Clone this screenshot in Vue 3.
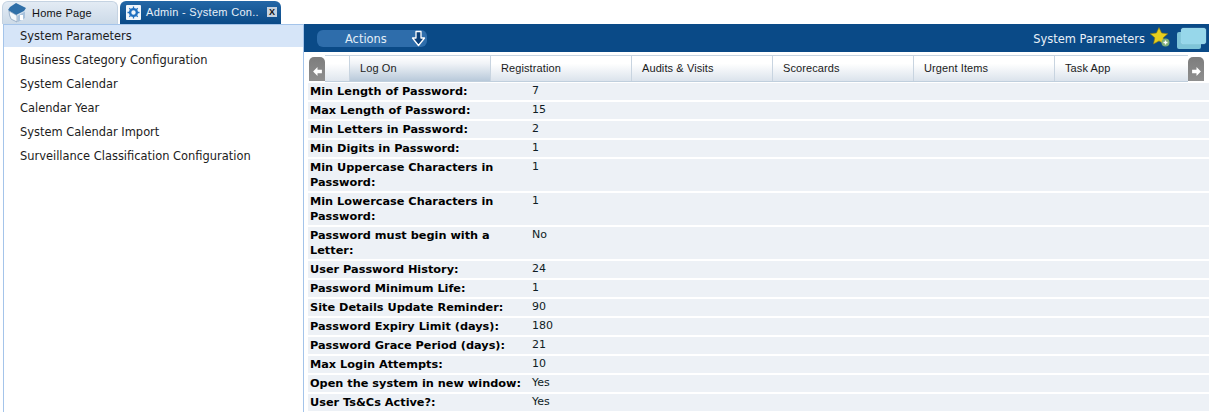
<script setup>
const items = ['System Parameters','Business Category Configuration','System Calendar','Calendar Year','System Calendar Import','Surveillance Classification Configuration']
const tabs = ['Log On','Registration','Audits & Visits','Scorecards','Urgent Items','Task App']
const rows = [
 ['Min Length of Password:','7'],['Max Length of Password:','15'],['Min Letters in Password:','2'],['Min Digits in Password:','1'],
 ['Min Uppercase Characters in Password:','1'],['Min Lowercase Characters in Password:','1'],['Password must begin with a Letter:','No'],
 ['User Password History:','24'],['Password Minimum Life:','1'],['Site Details Update Reminder:','90'],['Password Expiry Limit (days):','180'],
 ['Password Grace Period (days):','21'],['Max Login Attempts:','10'],['Open the system in new window:','Yes'],['User Ts&Cs Active?:','Yes']
]
</script>

<template>
  <div class="page">
    <div class="tabbar">
      <div class="ptab home">
        <svg class="ico" width="20" height="21" viewBox="0 0 20 21">
          <path d="M9 1 L19 6 L17 9 L9 13 L1 8 L3 5 Z" fill="#2f6fa8"/>
          <path d="M2 9 L10 13.5 V20 L4 17 Q2 13 2 9Z" fill="#f4f7fb" stroke="#6f8fb0" stroke-width=".6"/>
          <path d="M11 13.5 L18 9.5 V16 L11 20Z" fill="#a9c2dc"/>
          <rect x="13" y="13" width="3" height="5" fill="#fff"/>
        </svg>
        <span>Home Page</span>
      </div>
      <div class="ptab admin">
        <svg class="gear" width="15" height="15" viewBox="0 0 15 15">
          <rect width="15" height="15" rx="1" fill="#f2f6fb"/>
          <circle cx="7.5" cy="7.5" r="3.4" fill="none" stroke="#1f6fc0" stroke-width="2.4"/>
          <path d="M7.5 1.5V13.5M1.5 7.5H13.5M3.3 3.3L11.7 11.7M11.7 3.3L3.3 11.7" stroke="#1f6fc0" stroke-width="1.3" stroke-dasharray="2 8.2"/>
        </svg>
        <span class="atitle">Admin - System Con..</span>
        <span class="close">X</span>
      </div>
    </div>
    <div class="main">
      <aside class="side">
        <div v-for="(it,i) in items" :key="it" class="item" :class="{sel:i===0}">{{ it }}</div>
      </aside>
      <section class="panel">
        <header class="head">
          <div class="actions">
            <span class="alabel">Actions</span>
            <svg width="15" height="17" viewBox="0 0 15 17"><path d="M5 1.5H10V8H13.5L7.5 15.5L1.5 8H5Z" fill="#0b3f78" stroke="#fff" stroke-width="1.3" stroke-linejoin="round"/></svg>
          </div>
          <div class="htitle">System Parameters</div>
          <svg class="star" width="20" height="20" viewBox="0 0 20 20">
            <path d="M9 0.5 L11.6 6 L17.8 6.7 L13.2 10.8 L14.5 17 L9 13.9 L3.5 17 L4.8 10.8 L0.2 6.7 L6.4 6Z" fill="#e6cf1e" stroke="#8a7a10" stroke-width=".6"/>
            <circle cx="15.5" cy="15.5" r="4" fill="#7fae78"/>
            <path d="M13.5 15.5H17.5M15.5 13.5V17.5" stroke="#fff" stroke-width="1.3"/>
          </svg>
          <div class="win"><div class="winb"></div><div class="winf"></div></div>
        </header>
        <nav class="tabs">
          <div class="arrow">
            <svg width="11" height="11" viewBox="0 0 9 10"><path d="M0.5 5L4.5 1V3.5H8.5V6.5H4.5V9Z" fill="#fff"/></svg>
          </div>
          <div class="tabstrip">
            <div class="spacer"></div>
            <div v-for="(t,i) in tabs" :key="t" class="tab" :class="{on:i===0}">{{ t }}</div>
          </div>
          <div class="arrow">
            <svg width="11" height="11" viewBox="0 0 9 10"><path d="M8.5 5L4.5 1V3.5H0.5V6.5H4.5V9Z" fill="#fff"/></svg>
          </div>
        </nav>
        <div class="rows">
          <div v-for="r in rows" :key="r[0]" class="row">
            <div class="lab">{{ r[0] }}</div>
            <div class="val">{{ r[1] }}</div>
          </div>
        </div>
      </section>
    </div>
  </div>
</template>

<style>
html, body { margin: 0; background: #fff; overflow: hidden; }
</style>

<style scoped>
.page { width: 1211px; height: 412px; overflow: hidden; font-family: "DejaVu Sans", Verdana, sans-serif; font-size: 11.45px; color: #000; background: #fff; }
.tabbar { height: 24px; display: flex; padding-left: 2px; gap: 2px; box-sizing: border-box; }
.ptab { height: 23px; border-radius: 6px 6px 0 0; display: flex; align-items: center; box-sizing: border-box; font-family: "Liberation Sans", Arial, sans-serif; font-size: 11px; white-space: nowrap; }
.ptab span { margin-top: -1px; }
.home { width: 116px; margin-top: 1px; background: linear-gradient(#e3ebf4, #ccdae8); border: 1px solid #c5d3e2; border-bottom: 0; color: #111; padding-left: 4px; letter-spacing: .2px; }
.ico { margin-right: 5px; margin-top: -2px; flex: none; }
.admin { width: 161px; margin-top: 1px; background: linear-gradient(#2467a6, #0a4a87); color: #e8f0f8; padding-left: 6px; }
.gear { flex: none; margin-right: 5px; }
.atitle { flex: 1; letter-spacing: .3px; }
.close { width: 10px; height: 10px; margin-right: 4px; background: #c6d2de; color: #111; font-size: 9px; line-height: 10px; text-align: center; font-weight: bold; letter-spacing: 0; }
.main { display: flex; height: 388px; }
.side { width: 299px; margin-left: 3px; border: 1px solid #a4c4ea; border-bottom: 0; }
.item { height: 24px; line-height: 23px; padding-left: 16px; color: #1c1c1c; }
.item.sel { background: #d6e5f8; height: 22px; line-height: 22px; margin-bottom: 2px; }
.panel { width: 905px; }
.head { height: 28px; background: #0a4a87; display: flex; align-items: center; padding: 0 3px 0 13px; color: #e8f0f8; box-sizing: border-box; }
.actions { width: 110px; height: 17px; border-radius: 6px; background: #2e6dab; display: flex; align-items: center; justify-content: space-between; padding: 0 1px 0 28px; box-sizing: border-box; margin-top: 1px; color: #e3edf7; }
.alabel { margin-top: 1px; }
.htitle { margin-left: auto; margin-top: 1px; }
.star { margin-left: 5px; margin-top: -3px; flex: none; }
.win { position: relative; width: 29px; height: 22px; margin-left: 7px; flex: none; }
.winb { position: absolute; left: 0; top: 5px; width: 24px; height: 17px; background: #7ec4d8; border-radius: 2px; }
.winf { position: absolute; left: 4px; top: 1px; width: 25px; height: 16px; background: #97d7ea; border-radius: 3px; box-shadow: 0 0 1px #cfeef6; }
.tabs { display: flex; height: 27px; margin-top: 3px; padding-left: 5px; align-items: flex-start; }
.arrow { width: 16px; height: 24px; margin-top: 2px; flex: none; border-radius: 5px 5px 0 0; background: linear-gradient(#7d7d7d, #8f8f8f); display: flex; align-items: center; justify-content: center; padding-top: 4px; box-sizing: border-box; }
.tabstrip { display: flex; border-top: 1px solid #c8d4e0; border-bottom: 1px solid #c0cfdd; height: 27px; box-sizing: border-box; }
.spacer { width: 25px; flex: none; box-sizing: border-box; background: linear-gradient(#fff 30%, #dfe6ee); border-right: 1px solid #c8d4e0; }
.tab { width: 141px; flex: none; box-sizing: border-box; padding-left: 10px; line-height: 25px; font-family: "Liberation Sans", Arial, sans-serif; font-size: 11px; letter-spacing: .1px; color: #1b1b1b; background: linear-gradient(#fff 30%, #dbe3ec); border-right: 1px solid #c8d4e0; }
.tab:last-child { border-right: 0; width: 133px; }
.tab.on { background: linear-gradient(#fff, #f0f3f7 30%, #b8c9da); }
.rows { padding-left: 4px; display: flex; flex-direction: column; gap: 2px; margin-top: 1px; }
.row { display: flex; width: 901px; background: #edf1f6; padding: 1px 0 1px 2px; box-sizing: border-box; line-height: 15px; }
.lab { width: 222px; flex: none; font-weight: bold; font-size: 11.3px; color: #000; box-sizing: border-box; }
.val { color: #0f1c24; font-size: 11px; margin-top: -1px; }
</style>
